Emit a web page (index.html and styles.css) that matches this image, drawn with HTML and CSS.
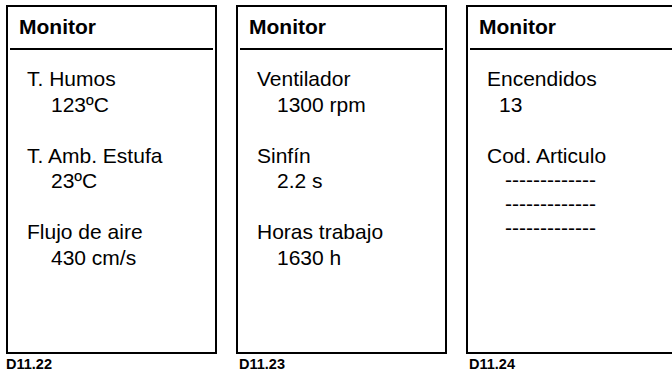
FILE: index.html
```html
<!DOCTYPE html>
<html lang="es">
<head>
  <meta charset="UTF-8" />
  <meta name="viewport" content="width=device-width, initial-scale=1.0" />
  <title>Monitor</title>
  <link rel="stylesheet" href="styles.css">
</head>
<body>
  <div class="screens">

    <!-- pantalla 1 -->
    <div class="screen">
      <div class="panel">
        <h2 class="panel-title">Monitor</h2>
        <div class="panel-body">
          <div class="item">
            <div class="label">T. Humos</div>
            <div class="value">123ºC</div>
          </div>
          <div class="item">
            <div class="label">T. Amb. Estufa</div>
            <div class="value">23ºC</div>
          </div>
          <div class="item">
            <div class="label">Flujo de aire</div>
            <div class="value">430 cm/s</div>
          </div>
        </div>
      </div>
      <div class="caption">D11.22</div>
    </div>

    <!-- pantalla 2 -->
    <div class="screen screen-2">
      <div class="panel">
        <h2 class="panel-title">Monitor</h2>
        <div class="panel-body">
          <div class="item">
            <div class="label">Ventilador</div>
            <div class="value">1300 rpm</div>
          </div>
          <div class="item">
            <div class="label">Sinfín</div>
            <div class="value">2.2 s</div>
          </div>
          <div class="item">
            <div class="label">Horas trabajo</div>
            <div class="value">1630 h</div>
          </div>
        </div>
      </div>
      <div class="caption">D11.23</div>
    </div>

    <!-- pantalla 3 -->
    <div class="screen screen-3">
      <div class="panel">
        <h2 class="panel-title">Monitor</h2>
        <div class="panel-body">
          <div class="item">
            <div class="label">Encendidos</div>
            <div class="value">13</div>
          </div>
          <div class="item">
            <div class="label">Cod. Articulo</div>
            <div class="dashes">-------------</div>
            <div class="dashes">-------------</div>
            <div class="dashes">-------------</div>
          </div>
        </div>
      </div>
      <div class="caption">D11.24</div>
    </div>

  </div>
</body>
</html>
```

FILE: styles.css
```css
* {
  box-sizing: border-box;
}
html, body {
  margin: 0;
  overflow: hidden;
}
body {
  font-family: "Liberation Sans", Arial, sans-serif;
  color: #000;
  background: #fff;
  padding: 5px 6px 0;
}
.screens {
  display: flex;
  gap: 19px;
}
.screen {
  flex: 0 0 211px;
}
.panel {
  height: 349px;
  border: 2px solid #000;
}
.panel-title {
  margin: 0 2px;
  padding: 8px 9px 9px;
  font-size: 21px;
  line-height: 24px;
  font-weight: bold;
  border-bottom: 2px solid #000;
}
.panel-body {
  padding: 16px 0 0 19px;
  font-size: 21px;
  line-height: 25.5px;
}
.item {
  margin-bottom: 25.5px;
}
.value {
  padding-left: 24px;
}
.screen-2 .value {
  padding-left: 20px;
}
.screen-3 .value {
  padding-left: 12px;
}
.dashes {
  padding-left: 18px;
  line-height: 24px;
}
.caption {
  margin-top: 2px;
  font-size: 14.5px;
  line-height: 16px;
  font-weight: bold;
}
.screen-2 .caption,
.screen-3 .caption {
  padding-left: 3px;
}
```
